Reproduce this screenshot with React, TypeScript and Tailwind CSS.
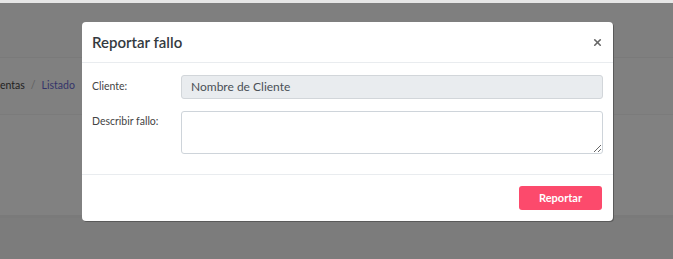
import { X } from "lucide-react";

export default function App() {
  return (
    <div className="relative h-[259px] w-[673px] overflow-hidden bg-[#808080] font-['Lato',sans-serif]">
      {/* page behind the backdrop */}
      <div className="flex h-full flex-col">
        <div className="h-[3px] bg-[#e6e6e6]" />
        <div className="h-[55px] border-b border-[#7a7a7a] bg-[#7f7f7f]" />
        <div className="flex h-[57px] items-center overflow-hidden border-b border-[#7b7b7b] bg-[#808080] text-[10.5px]">
          <span className="text-[#1f1f1f]">entas</span>
          <span className="mx-[6px] text-[#5e5e5e]">/</span>
          <span className="text-[#34346a]">Listado</span>
        </div>
        <div className="h-[100px] bg-[#818181]" />
        <div className="h-[3px] bg-[#7a7a7a]" />
        <div className="flex-1 bg-[#7c7c7c]" />
      </div>

      {/* modal */}
      <div className="absolute left-[82px] top-[22px] w-[531px] rounded-[4px] bg-white shadow-[1px_1px_0_#5a5a5a]">
        <div className="flex h-[41px] items-center justify-between border-b border-[#e9ecef] px-[10px]">
          <h3 className="text-[15px] font-semibold text-[#343a40]">Reportar fallo</h3>
          <X className="h-[11px] w-[11px] text-[#666]" strokeWidth={3.5} />
        </div>
        <div className="flex flex-col gap-[12px] px-[10px] pt-[12px] pb-[20px]">
          <div className="flex items-center">
            <label className="w-[89px] text-[10.5px] text-[#444]">Cliente:</label>
            <div className="flex h-[24px] flex-1 items-center rounded-[3px] border border-[#d2d6da] bg-[#e9ecef] px-[9px] text-[12px] text-[#495057]">
              Nombre de Cliente
            </div>
          </div>
          <div className="flex items-start">
            <label className="w-[89px] pt-[3px] text-[10.5px] text-[#444]">Describir fallo:</label>
            <textarea className="h-[43px] flex-1 rounded-[3px] border border-[#ced4da] bg-white" />
          </div>
        </div>
        <div className="flex h-[47px] items-center justify-end border-t border-[#e9ecef] px-[11px]">
          <button className="h-[24px] w-[83px] rounded-[3px] bg-[#fc4a6c] text-[11px] font-bold text-white">
            Reportar
          </button>
        </div>
      </div>
    </div>
  );
}
